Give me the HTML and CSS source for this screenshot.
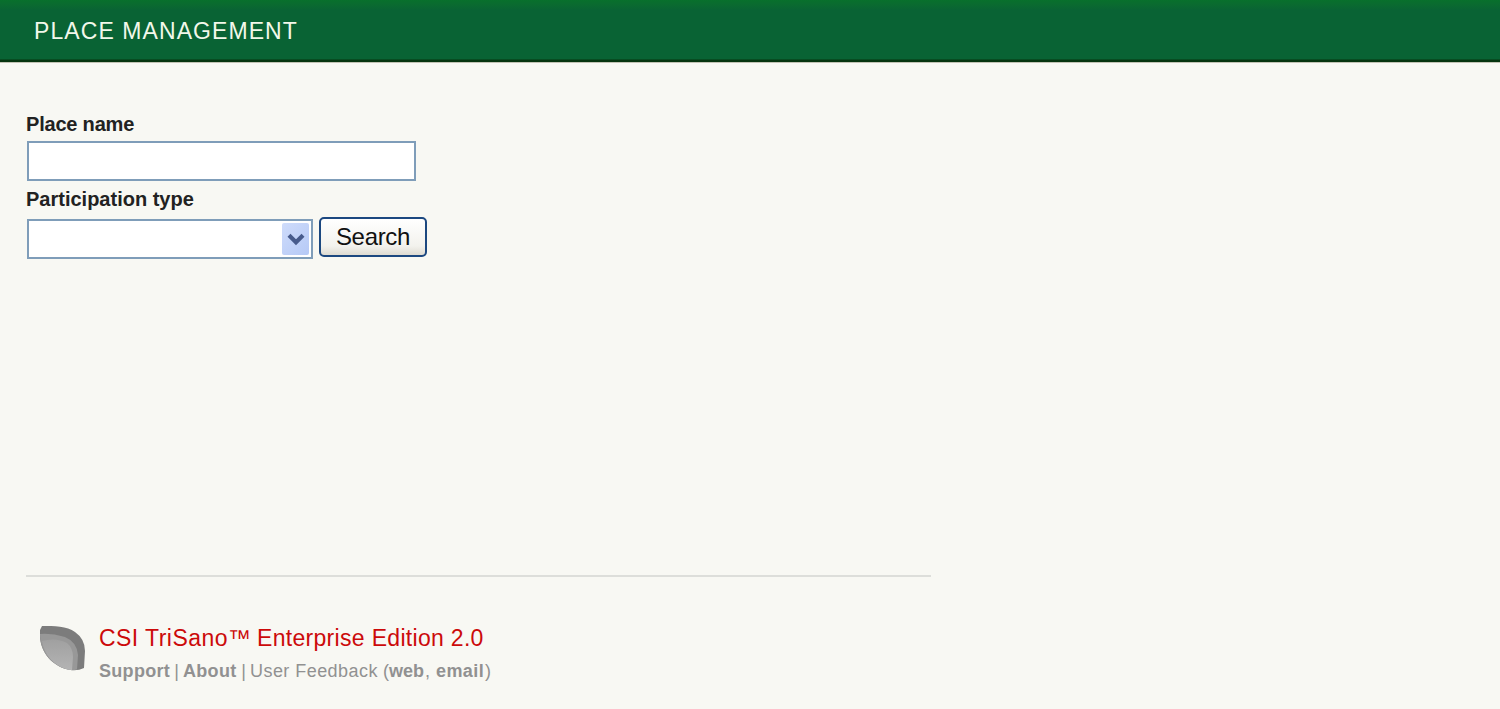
FILE: index.html
```html
<!DOCTYPE html>
<html lang="en">
<head>
<meta charset="utf-8">
<title>Place Management</title>
<link rel="stylesheet" href="styles.css">
</head>
<body>
<header class="bar"><h1 class="bar-title">PLACE MANAGEMENT</h1></header>
<main class="content">
  <form class="search-form">
    <label class="label label-name" for="name">Place name</label>
    <input class="field" id="name" type="text">
    <span class="label label-type">Participation type</span>
    <div class="row">
      <div class="select" role="combobox" aria-label="Participation type">
        <span class="select-button">
          <svg width="18" height="13" viewBox="0 0 18 13"><path d="M2 2.2 9 9.200 16 2.2" fill="none" stroke="#475b8c" stroke-width="4.200"/></svg>
        </span>
      </div>
      <button class="search" type="button">Search</button>
    </div>
  </form>
</main>
<footer class="footer">
  <svg class="logo" width="46" height="46" viewBox="0 0 46 46">
    <defs>
      <linearGradient id="leaf" x1="0" y1="0" x2="0" y2="1"><stop offset="0" stop-color="#a0a0a0"/><stop offset="1" stop-color="#b4b4b4"/></linearGradient>
    </defs>
    <path d="M2 0C14 0 27 0 35 6Q45 13 45 25L44 42Q36 46 26 43C10 38-2 23 0 4Z" fill="#7c7c7c"/>
    <path d="M0 8Q12 7 25 11Q37 16 38 29L37 43.500Q31 45 26 43C10 38 0 25 0 8Z" fill="#989898"/>
    <path d="M2 15Q16 11 27 17Q33 22 33 31L32 44Q28 44 26 43C13 39 4 28 2 15Z" fill="url(#leaf)"/>
  </svg>
  <div class="about">
    <div class="product"><span class="brand">CSI TriSano™</span><span>Enterprise Edition 2.0</span></div>
    <div class="links"><b class="support">Support</b><span class="sep">|</span><b class="about-link">About</b><span class="sep">|</span><span class="feedback">User Feedback</span><span>(</span><b class="web">web</b><span class="comma">,</span><b class="email">email</b><span>)</span></div>
  </div>
</footer>
</body>
</html>
```
FILE: styles.css
```css
* { box-sizing: border-box; }
body {
  margin: 0;
  height: 709px;
  display: flex;
  flex-direction: column;
  overflow: hidden;
  background: #f8f8f3;
  font-family: "Liberation Sans", Arial, sans-serif;
}
.bar {
  height: 63px;
  flex: none;
  padding: 18px 0 0 34px;
  background: linear-gradient(#08702c 0, #0a6a30 5px, #096334 10px, #096334 59px, #06350f 60px, #06350f 61.500px, #8a9078 62px, #fbf6f0 63px);
}
.bar-title {
  margin: 0;
  font-size: 23px;
  line-height: 27px;
  font-weight: 400;
  letter-spacing: 1.080px;
  color: #f2f8ea;
}
.content { flex: 1; padding: 49px 0 0 26px; }
.search-form { display: flex; flex-direction: column; align-items: flex-start; }
.label {
  font-size: 20px;
  line-height: 24px;
  font-weight: 700;
  color: #222;
}
.label-name { letter-spacing: -.200px; }
.field {
  width: 389px;
  height: 40px;
  margin: 5px 0 6px 1px;
  border: 2px solid #7f9db9;
  background: #fff;
}
.row { display: flex; gap: 6px; padding: 6px 0 0 1px; }
.select {
  width: 286px;
  height: 40px;
  margin-top: 2px;
  padding: 2px;
  border: 2px solid #7f9db9;
  background: #fff;
  display: flex;
  justify-content: flex-end;
}
.select-button {
  width: 27px;
  height: 32px;
  border-radius: 2px;
  background: linear-gradient(135deg, #cfdcfb, #b5c9f6);
  display: flex;
  align-items: center;
  justify-content: center;
}
.search {
  width: 108px;
  height: 40px;
  padding: 0 0 1px;
  border: 2px solid #1c4880;
  border-radius: 5px;
  background: linear-gradient(#fff, #f3f2ed 75%, #dedbd2);
  font: 24px "Liberation Sans", Arial, sans-serif;
  letter-spacing: -.300px;
  color: #111;
}
.footer {
  width: 905px;
  height: 134px;
  flex: none;
  margin-left: 26px;
  padding: 49px 0 0 14px;
  border-top: 2px solid #dddeda;
  display: flex;
  gap: 13px;
}
.logo { flex: none; }
.product {
  display: flex;
  font-size: 23px;
  line-height: 26px;
  letter-spacing: .310px;
  color: #cc0a0a;
  margin-top: -1px;
  white-space: nowrap;
}
.brand { width: 158px; letter-spacing: .450px; }
.links {
  display: flex;
  font-size: 18px;
  line-height: 22px;
  margin-top: 9px;
  color: #919191;
  white-space: nowrap;
}
.sep { width: 13px; text-align: center; }
.support { width: 71px; letter-spacing: .300px; }
.about-link { width: 54px; letter-spacing: .300px; }
.feedback { width: 133px; letter-spacing: .450px; }
.web { width: 36px; }
.comma { width: 11px; }
.email { width: 49px; letter-spacing: .400px; }
```
